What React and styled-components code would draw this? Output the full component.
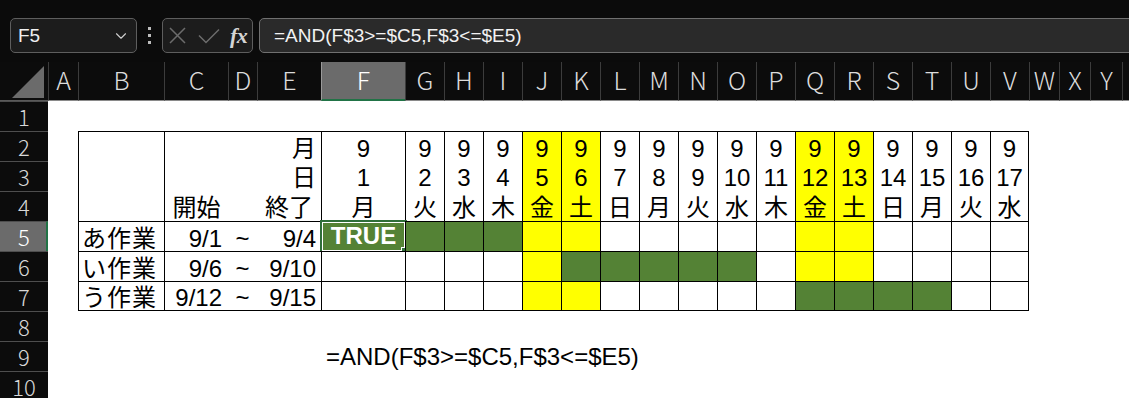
import React from 'react';
import styled, { createGlobalStyle } from 'styled-components';
import { ChevronDown } from 'lucide-react';

const GlobalStyle = createGlobalStyle`
  *, *::before, *::after { box-sizing: border-box; }
  html, body { margin: 0; padding: 0; background: #0b0b0b; }
  body {
    width: 1129px;
    height: 398px;
    overflow: hidden;
    font-family: "Liberation Sans", "Noto Sans CJK JP", sans-serif;
  }
`;

const COL_WIDTHS = [48, 30, 86, 64, 29, 64, 84, ...Array(16).fill(39), 30, 31, 32, 40];
const LETTERS = 'ABCDEFGHIJKLMNOPQRSTUVWXY'.split('');

const DAYS = [
  [1, '月'], [2, '火'], [3, '水'], [4, '木'], [5, '金', true], [6, '土', true],
  [7, '日'], [8, '月'], [9, '火'], [10, '水'], [11, '木'], [12, '金', true],
  [13, '土', true], [14, '日'], [15, '月'], [16, '火'], [17, '水'],
];

const TASKS = [
  { name: 'あ作業', start: 1, end: 4 },
  { name: 'い作業', start: 6, end: 10 },
  { name: 'う作業', start: 12, end: 15 },
];

const GREEN = '#548235';
const YELLOW = '#ffff00';
const FORMULA = '=AND(F$3>=$C5,F$3<=$E5)';

const Page = styled.div`
  width: 1129px;
  height: 398px;
  overflow: hidden;
  background: #0b0b0b;
`;

/* ---------- formula bar ---------- */
const TopBar = styled.div`
  height: 62px;
  display: flex;
  align-items: flex-start;
  padding: 18px 0 0 10px;
  overflow: hidden;
`;

const NameBox = styled.div`
  flex: 0 0 127px;
  height: 35px;
  border: 1px solid #5e5e5e;
  border-radius: 5px;
  background: #1c1c1c;
  display: flex;
  align-items: center;
  justify-content: space-between;
  padding: 0 6px 0 7px;
  color: #f0f0f0;
  font-size: 19px;
`;

const Grip = styled.div`
  flex: 0 0 25px;
  height: 35px;
  display: flex;
  flex-direction: column;
  align-items: center;
  justify-content: center;
  gap: 4px;
`;

const GripDot = styled.span`
  width: 3px;
  height: 3px;
  background: #bdbdbd;
`;

const FxBox = styled.div`
  flex: 0 0 91px;
  height: 35px;
  border: 1px solid #5e5e5e;
  border-radius: 5px;
  background: #1c1c1c;
  display: flex;
  align-items: center;
  padding-left: 6px;
  gap: 12px;
`;

const FxLabel = styled.span`
  font-family: "Liberation Serif", serif;
  font-style: italic;
  font-weight: bold;
  font-size: 22px;
  color: #d4d4d4;
  margin-left: -2px;
  letter-spacing: -0.5px;
`;

const FormulaBox = styled.div`
  flex: 1 0 auto;
  margin-left: 6px;
  margin-right: -20px;
  height: 35px;
  border: 1px solid #707070;
  border-radius: 5px;
  background: #2a2a2a;
  display: flex;
  align-items: center;
  padding-left: 14px;
  color: #f2f2f2;
  font-size: 19px;
  white-space: nowrap;
`;

/* ---------- sheet ---------- */
const Sheet = styled.div`
  display: grid;
  grid-template-columns: ${COL_WIDTHS.map((w) => `${w}px`).join(' ')};
  grid-template-rows: 39px repeat(9, 30px) 27px;
  background: #ffffff;
  width: 1129px;
  overflow: hidden;
`;

const Cell = styled.div`
  grid-column: ${(p) => p.$col} / span ${(p) => p.$colSpan || 1};
  grid-row: ${(p) => p.$row} / span ${(p) => p.$rowSpan || 1};
  min-width: 0;
`;

const Corner = styled(Cell)`
  background: #0c0c0c;
  border-bottom: 1px solid #5a5a5a;
  display: flex;
`;

const ColHeader = styled(Cell)`
  background: ${(p) => (p.$active ? '#6b6b6b' : '#0c0c0c')};
  border-left: 1px solid ${(p) => (p.$active ? '#9a9a9a' : '#3c3c3c')};
  border-bottom: ${(p) => (p.$active ? '2px solid #217346' : '1px solid #8a8a8a')};
  color: ${(p) => (p.$active ? '#ffffff' : '#dcdcdc')};
  font-family: "Noto Sans CJK JP", sans-serif;
  font-weight: 300;
  font-size: 25px;
  line-height: 1;
  display: flex;
  align-items: center;
  justify-content: center;
  padding-bottom: 3px;
  overflow: hidden;
`;

const RowHeader = styled(Cell)`
  background: ${(p) => (p.$active ? '#6b6b6b' : '#0c0c0c')};
  border-top: 1px solid #4e4e4e;
  border-right: ${(p) => (p.$active ? '2px solid #217346' : 'none')};
  color: ${(p) => (p.$active ? '#ffffff' : '#d8d8d8')};
  font-family: "Noto Sans CJK JP", sans-serif;
  font-weight: 300;
  font-size: 22px;
  line-height: 20px;
  display: flex;
  align-items: flex-start;
  justify-content: center;
  padding-top: 4px;
  padding-left: ${(p) => (p.$active ? '2px' : '0')};
`;

const TableCell = styled(Cell)`
  position: relative;
  border-left: 1px solid #000;
  border-top: 1px solid #000;
  border-right: ${(p) => (p.$lastCol ? '1px solid #000' : 'none')};
  border-bottom: ${(p) => (p.$lastRow ? '1px solid #000' : 'none')};
  background: ${(p) => p.$fill || '#ffffff'};
  color: #000;
  font-size: 24px;
`;

const HeadBlock = styled(TableCell)`
  display: grid;
  grid-template-columns: 63px 29px 1fr;
  grid-template-rows: repeat(3, 1fr);
`;

const RangeBlock = styled(TableCell)`
  display: grid;
  grid-template-columns: 63px 29px 1fr;
`;

const DateHead = styled(TableCell)`
  display: flex;
  flex-direction: column;
`;

const Text = styled.div`
  grid-column: ${(p) => p.$gc || 'auto'};
  grid-row: ${(p) => p.$gr || 'auto'};
  flex: 1 1 0;
  display: flex;
  align-items: flex-end;
  justify-content: ${(p) => p.$align || 'flex-start'};
  line-height: 24px;
  padding: 0 ${(p) => p.$padR ?? 5}px ${(p) => p.$padB ?? 0}px ${(p) => p.$padL ?? 0}px;
  letter-spacing: ${(p) => p.$spacing || 0}px;
  white-space: nowrap;
  min-height: 0;
`;

const BoolText = styled.div`
  height: 100%;
  display: flex;
  align-items: flex-end;
  justify-content: center;
  padding-bottom: 3px;
  color: #ffffff;
  font-weight: bold;
  font-size: 24px;
  line-height: 24px;
`;

const Selection = styled.div`
  position: absolute;
  top: -2px;
  left: -2px;
  right: -2px;
  bottom: -2px;
  border: 2px solid #2f6e39;
  box-shadow: inset 0 0 0 1px #ffffff;
  pointer-events: none;
`;

const FillHandle = styled.div`
  position: absolute;
  right: -3px;
  bottom: -3px;
  width: 7px;
  height: 7px;
  background: #2f6e39;
  border: 1px solid #ffffff;
`;

const FormulaNote = styled(Cell)`
  display: flex;
  align-items: flex-end;
  padding: 0 0 2px 5px;
  font-size: 24px;
  line-height: 24px;
  color: #000;
  white-space: nowrap;
`;

function CrossIcon() {
  return (
    <svg width="17" height="17" viewBox="0 0 17 17">
      <path d="M1 1 L16 16 M16 1 L1 16" stroke="#6c6c6c" strokeWidth="1.5" fill="none" />
    </svg>
  );
}

function CheckIcon() {
  return (
    <svg width="22" height="16" viewBox="0 0 22 16">
      <path d="M1 7.5 L8 14.5 L21 1.5" stroke="#6c6c6c" strokeWidth="1.5" fill="none" />
    </svg>
  );
}

export default function App() {
  const lastDayIdx = DAYS.length - 1;
  return (
    <>
      <GlobalStyle />
      <Page>
        <TopBar>
          <NameBox>
            <span>F5</span>
            <ChevronDown size={18} strokeWidth={1.5} color="#cfcfcf" />
          </NameBox>
          <Grip>
            <GripDot />
            <GripDot />
            <GripDot />
          </Grip>
          <FxBox>
            <CrossIcon />
            <CheckIcon />
            <FxLabel>fx</FxLabel>
          </FxBox>
          <FormulaBox>{FORMULA}</FormulaBox>
        </TopBar>

        <Sheet>
          <Corner $col={1} $row={1}>
            <svg width="48" height="38" viewBox="0 0 48 38">
              <polygon points="44,4 44,36 12,36" fill="#6b6b6b" />
            </svg>
          </Corner>
          {LETTERS.map((l, i) => (
            <ColHeader key={l} $col={i + 2} $row={1} $active={l === 'F'}>
              {l}
            </ColHeader>
          ))}
          <ColHeader $col={LETTERS.length + 2} $row={1} />
          {Array.from({ length: 10 }, (_, i) => (
            <RowHeader key={i} $col={1} $row={i + 2} $active={i + 1 === 5}>
              {i + 1}
            </RowHeader>
          ))}

          {/* header rows 2-4 */}
          <TableCell $col={3} $row={3} $rowSpan={3} />
          <HeadBlock $col={4} $colSpan={3} $row={3} $rowSpan={3}>
            <Text $gc={3} $gr={1} $align="flex-end" $padB={1}>月</Text>
            <Text $gc={3} $gr={2} $align="flex-end" $padB={1}>日</Text>
            <Text $gc={1} $gr={3} $align="center" $padR={0} $padB={1}>開始</Text>
            <Text $gc={3} $gr={3} $align="center" $padR={0} $padB={1}>終了</Text>
          </HeadBlock>
          {DAYS.map(([d, w, weekend], i) => (
            <DateHead
              key={d}
              $col={7 + i}
              $row={3}
              $rowSpan={3}
              $lastCol={i === lastDayIdx}
              $fill={weekend ? YELLOW : '#ffffff'}
            >
              <Text $align="center" $padR={0} $padB={1}>9</Text>
              <Text $align="center" $padR={0} $padB={1}>{d}</Text>
              <Text $align="center" $padR={0} $padB={1}>{w}</Text>
            </DateHead>
          ))}

          {/* task rows 5-7 */}
          {TASKS.map((t, ti) => {
            const row = 6 + ti;
            const lastRow = ti === TASKS.length - 1;
            return (
              <React.Fragment key={t.name}>
                <TableCell $col={3} $row={row} $lastRow={lastRow}>
                  <Text $padL={3} $spacing={1} style={{ height: '100%' }}>{t.name}</Text>
                </TableCell>
                <RangeBlock $col={4} $colSpan={3} $row={row} $lastRow={lastRow}>
                  <Text $align="flex-end" $padR={6}>{`9/${t.start}`}</Text>
                  <Text $align="center" $padR={0}>~</Text>
                  <Text $align="flex-end" $padR={5}>{`9/${t.end}`}</Text>
                </RangeBlock>
                {DAYS.map(([d, , weekend], i) => {
                  const active = d >= t.start && d <= t.end;
                  const fill = active ? GREEN : weekend ? YELLOW : '#ffffff';
                  const selected = ti === 0 && i === 0;
                  return (
                    <TableCell
                      key={d}
                      $col={7 + i}
                      $row={row}
                      $lastRow={lastRow}
                      $lastCol={i === lastDayIdx}
                      $fill={fill}
                    >
                      {selected && (
                        <>
                          <BoolText>TRUE</BoolText>
                          <Selection>
                            <FillHandle />
                          </Selection>
                        </>
                      )}
                    </TableCell>
                  );
                })}
              </React.Fragment>
            );
          })}

          <FormulaNote $col={7} $colSpan={14} $row={10}>{FORMULA}</FormulaNote>
        </Sheet>
      </Page>
    </>
  );
}
